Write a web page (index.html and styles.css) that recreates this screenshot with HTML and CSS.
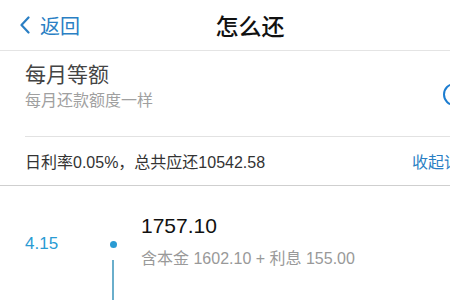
FILE: index.html
```html
<!DOCTYPE html>
<html lang="zh-CN">
<head>
    <meta charset="UTF-8">
    <meta name="viewport" content="width=device-width, initial-scale=1.0">
    <title>怎么还</title>
    <link rel="stylesheet" href="styles.css">
</head>
<body>
    <header class="nav">
        <a class="back" href="#">
            <svg class="chevron" width="10" height="18" viewBox="0 0 10 18">
                <path d="M8.5 1.5 L1.5 9 L8.5 16.5" fill="none" stroke="#2a7fc4" stroke-width="2.2" stroke-linecap="round" stroke-linejoin="round"/>
            </svg>
            <span>返回</span>
        </a>
        <h1 class="title">怎么还</h1>
    </header>

    <section class="plan">
        <div class="plan-row">
            <div class="plan-text">
                <div class="plan-name">每月等额</div>
                <div class="plan-desc">每月还款额度一样</div>
            </div>
            <span class="radio"></span>
        </div>
        <div class="summary">
            <span>日利率0.05%，总共应还10542.58</span>
            <a class="toggle" href="#">收起详情</a>
        </div>
    </section>

    <ul class="timeline">
        <li class="entry">
            <div class="date">4.15</div>
            <div class="track"><span class="dot"></span><span class="rail"></span></div>
            <div class="detail">
                <div class="amount">1757.10</div>
                <div class="parts">含本金 1602.10 + 利息 155.00</div>
            </div>
        </li>
    </ul>
</body>
</html>
```

FILE: styles.css
```css
body {
    margin: 0;
    background: #fff;
    font-family: "Liberation Sans", "Noto Sans CJK SC", sans-serif;
    color: #222;
    overflow: hidden;
    height: 300px;
}
a {
    text-decoration: none;
}
.nav {
    position: relative;
    height: 50px;
    display: flex;
    align-items: center;
    border-bottom: 1px solid #e4e4e4;
}
.back {
    display: flex;
    align-items: center;
    gap: 10px;
    padding-left: 20px;
    color: #2a7fc4;
    font-size: 20px;
}
.title {
    position: absolute;
    left: 50px;
    right: 0;
    margin: 0;
    text-align: center;
    font-size: 23px;
    font-weight: 500;
    color: #111;
    pointer-events: none;
}
.plan {
    padding-left: 25px;
    border-bottom: 1px solid #cfcfcf;
}
.plan-row {
    height: 86px;
    box-sizing: border-box;
    padding-top: 11px;
    display: flex;
    align-items: flex-start;
    justify-content: space-between;
    border-bottom: 1px solid #e2e2e2;
    overflow: hidden;
}
.plan-name {
    font-size: 21px;
    color: #444;
    line-height: 26px;
}
.plan-desc {
    margin-top: 2px;
    font-size: 16px;
    color: #a0a0a0;
    line-height: 22px;
}
.radio {
    flex: none;
    width: 19px;
    height: 19px;
    border: 2px solid #1d7dd0;
    border-radius: 50%;
    margin-right: -16px;
    margin-top: 21px;
}
.summary {
    height: 48px;
    display: flex;
    align-items: center;
    justify-content: space-between;
    font-size: 16px;
    color: #333;
    white-space: nowrap;
    overflow: hidden;
}
.toggle {
    color: #2a7fc4;
    margin-right: -26px;
}
.timeline {
    list-style: none;
    margin: 0;
    padding: 0;
}
.entry {
    display: flex;
    padding-top: 27px;
}
.date {
    width: 90px;
    box-sizing: border-box;
    padding-left: 25px;
    padding-top: 21px;
    font-size: 17px;
    color: #2a9bd3;
}
.track {
    width: 46px;
    display: flex;
    flex-direction: column;
    align-items: center;
    padding-top: 28px;
}
.dot {
    width: 7px;
    height: 7px;
    border-radius: 50%;
    background: #2a9bd3;
}
.rail {
    width: 2px;
    height: 60px;
    margin-top: 12px;
    background: #6aaecb;
}
.detail {
    padding-left: 5px;
}
.amount {
    font-size: 21px;
    color: #111;
    line-height: 26px;
}
.parts {
    margin-top: 6px;
    font-size: 16px;
    color: #999;
}
```
